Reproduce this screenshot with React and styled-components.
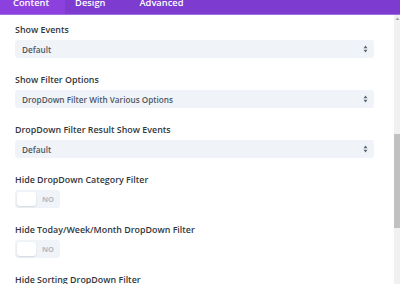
import React from 'react';
import styled, { createGlobalStyle } from 'styled-components';

const purple = '#7d3bcf';
const purpleActive = '#8c40de';
const fieldBg = '#f0f3f8';
const labelColor = '#32373c';
const valueColor = '#4c5866';

const GlobalStyle = createGlobalStyle`
  html, body {
    margin: 0;
    padding: 0;
    overflow: hidden;
    background: #fff;
  }
  * { box-sizing: border-box; }
`;

const Panel = styled.div`
  width: 400px;
  height: 284px;
  display: flex;
  flex-direction: column;
  font-family: 'Open Sans', 'Liberation Sans', sans-serif;
  overflow: hidden;
`;

const TabBar = styled.div`
  height: 15px;
  flex-shrink: 0;
  display: flex;
  background: ${purple};
  border-bottom: 1px solid #a26fe3;
  overflow: hidden;
`;

const Tab = styled.div`
  padding: 0 ${props => props.$right}px 6px ${props => props.$left}px;
  background: ${props => (props.$active ? purpleActive : 'transparent')};
  color: #fff;
  font-size: 9.3px;
  font-weight: 600;
  line-height: 10px;
  display: flex;
  align-items: flex-end;
`;

const Body = styled.div`
  flex: 1;
  display: flex;
  min-height: 0;
`;

const Content = styled.div`
  flex: 1;
  padding: 10px 20px 0 15px;
  display: flex;
  flex-direction: column;
  overflow: hidden;
`;

const Field = styled.div`
  display: flex;
  flex-direction: column;
  height: 50px;
  flex-shrink: 0;
`;

const Label = styled.div`
  font-size: 8.9px;
  font-weight: 600;
  color: ${labelColor};
  line-height: 10px;
  margin-bottom: 5px;
`;

const Select = styled.div`
  height: 18px;
  background: ${fieldBg};
  border-radius: 3px;
  display: flex;
  align-items: center;
  justify-content: space-between;
  padding: 0 6px 0 7px;
  font-size: 8.2px;
  font-weight: 600;
  color: ${valueColor};
`;

const Toggle = styled.div`
  width: 45px;
  height: 18px;
  background: ${fieldBg};
  border-radius: 3px;
  display: flex;
  align-items: center;
  padding: 0 2px;
  gap: 6px;
`;

const Knob = styled.div`
  width: 19px;
  height: 14px;
  background: #fff;
  border-radius: 3px;
  box-shadow: 0 1px 2px rgba(0, 0, 0, 0.12);
`;

const ToggleText = styled.span`
  font-size: 7.5px;
  font-weight: 700;
  color: #b3bac5;
`;

const Scrollbar = styled.div`
  width: 6px;
  background: #f1f1f1;
  display: flex;
  flex-direction: column;
  padding-top: 1px;
`;

const ArrowCap = styled.div`
  height: 118px;
  display: flex;
  justify-content: center;
`;

const Thumb = styled.div`
  height: 94px;
  background: #c1c1c1;
`;

const Caret = () => (
  <svg width="5" height="8" viewBox="0 0 5 8">
    <path d="M2.5 0.5 L4.5 3.2 L0.5 3.2 Z" fill="#5a6572" />
    <path d="M2.5 7.5 L4.5 4.8 L0.5 4.8 Z" fill="#5a6572" />
  </svg>
);

const UpArrow = () => (
  <svg width="5" height="5" viewBox="0 0 5 5">
    <path d="M0.5 4 L2.5 1.5 L4.5 4 Z" fill="#a3a3a3" />
  </svg>
);

const tabs = [
  { name: 'Content', left: 13, right: 16, active: true },
  { name: 'Design', left: 10, right: 17 },
  { name: 'Advanced', left: 17, right: 17 },
];

const selects = [
  { label: 'Show Events', value: 'Default' },
  { label: 'Show Filter Options', value: 'DropDown Filter With Various Options' },
  { label: 'DropDown Filter Result Show Events', value: 'Default' },
];

const toggles = [
  'Hide DropDown Category Filter',
  'Hide Today/Week/Month DropDown Filter',
  'Hide Sorting DropDown Filter',
];

export default function App() {
  return (
    <Panel>
      <GlobalStyle />
      <TabBar>
        {tabs.map(t => (
          <Tab key={t.name} $left={t.left} $right={t.right} $active={t.active}>
            {t.name}
          </Tab>
        ))}
      </TabBar>
      <Body>
        <Content>
          {selects.map(s => (
            <Field key={s.label}>
              <Label>{s.label}</Label>
              <Select>
                <span>{s.value}</span>
                <Caret />
              </Select>
            </Field>
          ))}
          {toggles.map(t => (
            <Field key={t}>
              <Label>{t}</Label>
              <Toggle>
                <Knob />
                <ToggleText>NO</ToggleText>
              </Toggle>
            </Field>
          ))}
        </Content>
        <Scrollbar>
          <ArrowCap>
            <UpArrow />
          </ArrowCap>
          <Thumb />
        </Scrollbar>
      </Body>
    </Panel>
  );
}
